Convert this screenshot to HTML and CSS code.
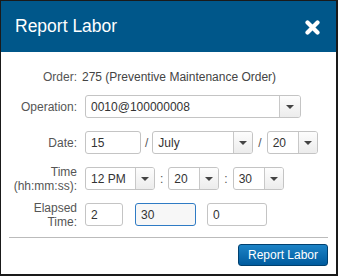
FILE: index.html
```html
<!DOCTYPE html>
<html lang="en">
<head>
  <meta charset="UTF-8">
  <title>Report Labor</title>
  <link rel="stylesheet" href="styles.css">
</head>
<body>
  <div class="dialog">
    <div class="dialog-header">
      <h1>Report Labor</h1>
      <button class="close-btn" aria-label="Close">
        <svg width="15" height="15" viewBox="0 0 15 15">
          <path d="M2.5 2.5 L12.5 12.5 M12.5 2.5 L2.5 12.5" stroke="#fff" stroke-width="4.2" stroke-linecap="round"/>
        </svg>
      </button>
    </div>
    <div class="dialog-body">
      <div class="row row-order">
        <label>Order:</label>
        <span class="value">275 (Preventive Maintenance Order)</span>
      </div>
      <div class="row">
        <label>Operation:</label>
        <div class="select w-op"><span>0010@100000008</span><i class="arrow"></i></div>
      </div>
      <div class="row">
        <label>Date:</label>
        <input class="field w-day" type="text" value="15">
        <span class="sep sep-date">/</span>
        <div class="select w-month"><span>July</span><i class="arrow"></i></div>
        <span class="sep">/</span>
        <div class="select w-small"><span>20</span><i class="arrow"></i></div>
      </div>
      <div class="row">
        <label>Time<br>(hh:mm:ss):</label>
        <div class="select w-hour"><span>12 PM</span><i class="arrow"></i></div>
        <span class="sep">:</span>
        <div class="select w-small"><span>20</span><i class="arrow"></i></div>
        <span class="sep">:</span>
        <div class="select w-small"><span>30</span><i class="arrow"></i></div>
      </div>
      <div class="row">
        <label>Elapsed<br>Time:</label>
        <input class="field w-hrs" type="text" value="2">
        <input class="field w-min focused" type="text" value="30">
        <input class="field w-sec" type="text" value="0">
      </div>
    </div>
    <div class="dialog-footer">
      <button class="report-btn">Report Labor</button>
    </div>
  </div>
</body>
</html>
```

FILE: styles.css
```css
body {
  margin: 0;
  font-family: "Liberation Sans", Arial, sans-serif;
  font-size: 12px;
  background: #fff;
}
.dialog {
  box-sizing: border-box;
  width: 338px;
  height: 276px;
  border-style: solid;
  border-color: #1a1a1a;
  border-width: 1px 2px 2px 1px;
  display: flex;
  flex-direction: column;
}
.dialog-header {
  height: 51px;
  background: #00578a;
  display: flex;
  align-items: center;
  justify-content: space-between;
  padding: 0 16px 0 14px;
}
.dialog-header h1 {
  margin: 0;
  color: #fff;
  font-size: 17.5px;
  font-weight: normal;
}
.close-btn {
  background: none;
  border: none;
  padding: 0;
  width: 15px;
  height: 15px;
  margin-top: 1px;
}
.close-btn svg { display: block; }
.dialog-body {
  padding-top: 17px;
  display: flex;
  flex-direction: column;
  gap: 13px;
}
.row {
  display: flex;
  align-items: center;
  height: 23px;
}
.row-order {
  height: 16px;
  margin-bottom: -3px;
}
.row label {
  width: 76px;
  text-align: right;
  color: #555;
  line-height: 14px;
  flex-shrink: 0;
}
.row .value {
  margin-left: 5px;
  color: #444;
}
.row label + .select,
.row label + .field {
  margin-left: 8px;
}
.select {
  box-sizing: border-box;
  height: 23px;
  border: 1px solid #c4c4c4;
  border-radius: 3px;
  background: #fff;
  display: flex;
  align-items: center;
  color: #333;
}
.select span {
  flex: 1;
  padding-left: 5px;
}
.select .arrow {
  align-self: stretch;
  width: 18px;
  border-left: 1px solid #c8c8c8;
  background: linear-gradient(#fdfdfd, #ececec);
  border-radius: 0 2px 2px 0;
  display: flex;
  align-items: center;
  justify-content: center;
}
.select .arrow::after {
  content: "";
  border-left: 4px solid transparent;
  border-right: 4px solid transparent;
  border-top: 4px solid #444;
}
.field {
  box-sizing: border-box;
  height: 23px;
  border: 1px solid #c4c4c4;
  border-radius: 3px;
  padding: 0 5px;
  font: inherit;
  color: #333;
  background: #fff;
}
.field.focused {
  border-color: #2f7bc4;
  background: #f7f7f7;
  outline: none;
}
.sep {
  margin: 0 5px;
  color: #555;
}
.sep-date { margin: 0 4px; }
.w-op { width: 216px; }
.w-op .arrow { width: 20px; }
.w-day { width: 56px; }
.w-month { width: 101px; }
.w-small { width: 51px; }
.w-hour { width: 70px; }
.w-hrs { width: 38px; }
.w-min { width: 61px; margin-left: 12px; }
.w-sec { width: 60px; margin-left: 11px; }
.dialog-footer {
  margin: auto 8px 0 8px;
  border-top: 1px solid #bbb;
  padding: 6px 0 8px 0;
  display: flex;
  justify-content: flex-end;
}
.report-btn {
  width: 90px;
  height: 22px;
  padding: 0;
  font: inherit;
  color: #fff;
  background: linear-gradient(#1c83c6, #005b9e);
  border: 1px solid #00406f;
  border-radius: 3px;
}
```
